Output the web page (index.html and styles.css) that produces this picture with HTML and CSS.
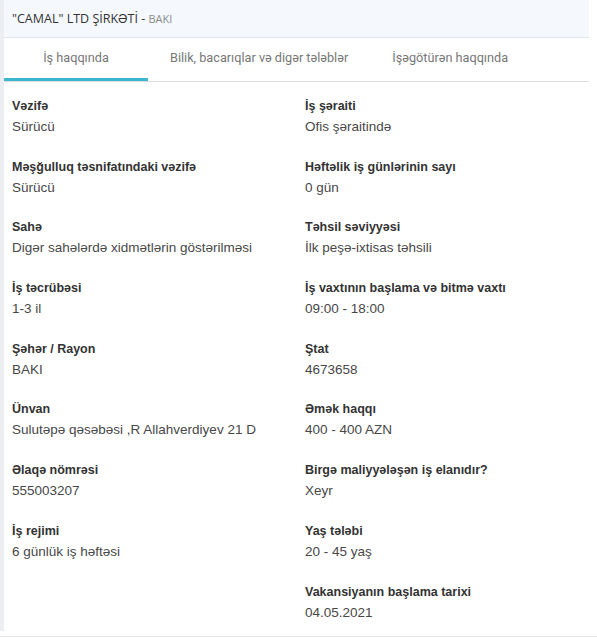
FILE: index.html
```html
<!DOCTYPE html>
<html lang="az">
<head>
    <meta charset="UTF-8">
    <meta name="viewport" content="width=device-width, initial-scale=1.0">
    <title>Vakansiya</title>
    <link rel="stylesheet" href="styles.css">
</head>
<body>
    <div class="vacancy">
        <div class="vacancy-head">
            "CAMAL" LTD ŞİRKƏTİ - <span class="city">BAKI</span>
        </div>
        <ul class="tabs">
            <li class="tab active">İş haqqında</li>
            <li class="tab">Bilik, bacarıqlar və digər tələblər</li>
            <li class="tab">İşəgötürən haqqında</li>
        </ul>
        <div class="details">
            <div class="item"><div class="label">Vəzifə</div><div class="value">Sürücü</div></div>
            <div class="item"><div class="label">İş şəraiti</div><div class="value">Ofis şəraitində</div></div>
            <div class="item"><div class="label">Məşğulluq təsnifatındaki vəzifə</div><div class="value">Sürücü</div></div>
            <div class="item"><div class="label">Həftəlik iş günlərinin sayı</div><div class="value">0 gün</div></div>
            <div class="item"><div class="label">Sahə</div><div class="value">Digər sahələrdə xidmətlərin göstərilməsi</div></div>
            <div class="item"><div class="label">Təhsil səviyyəsi</div><div class="value">İlk peşə-ixtisas təhsili</div></div>
            <div class="item"><div class="label">İş təcrübəsi</div><div class="value">1-3 il</div></div>
            <div class="item"><div class="label">İş vaxtının başlama və bitmə vaxtı</div><div class="value">09:00 - 18:00</div></div>
            <div class="item"><div class="label">Şəhər / Rayon</div><div class="value">BAKI</div></div>
            <div class="item"><div class="label">Ştat</div><div class="value">4673658</div></div>
            <div class="item"><div class="label">Ünvan</div><div class="value">Sulutəpə qəsəbəsi ,R Allahverdiyev 21 D</div></div>
            <div class="item"><div class="label">Əmək haqqı</div><div class="value">400 - 400 AZN</div></div>
            <div class="item"><div class="label">Əlaqə nömrəsi</div><div class="value">555003207</div></div>
            <div class="item"><div class="label">Birgə maliyyələşən iş elanıdır?</div><div class="value">Xeyr</div></div>
            <div class="item"><div class="label">İş rejimi</div><div class="value">6 günlük iş həftəsi</div></div>
            <div class="item"><div class="label">Yaş tələbi</div><div class="value">20 - 45 yaş</div></div>
            <div class="item"></div>
            <div class="item"><div class="label">Vakansiyanın başlama tarixi</div><div class="value">04.05.2021</div></div>
        </div>
    </div>
    <div class="page-line"></div>
</body>
</html>
```

FILE: styles.css
```css
/* General styles */
body {
    margin: 0;
    padding: 0;
    background-color: #fff;
    font-family: "Liberation Sans", Arial, sans-serif;
    color: #333;
}

.vacancy {
    width: 585px;
    border-left: 4px solid #eceef1;
    padding-bottom: 8px;
}

/* Header */
.vacancy-head {
    height: 37px;
    line-height: 37px;
    padding-left: 8px;
    background-color: #f5f9fd;
    border-bottom: 1px solid #e2e6ea;
    font-family: "Open Sans", sans-serif;
    font-size: 12.5px;
    color: #333;
}

.vacancy-head .city {
    font-size: 11px;
    color: #8a8a8a;
}

/* Tabs */
.tabs {
    list-style: none;
    margin: 0;
    padding: 0;
    display: flex;
    height: 43px;
    border-bottom: 1px solid #dcdcdc;
}

.tab {
    padding: 0 22px;
    line-height: 40px;
    font-family: Roboto, sans-serif;
    font-size: 12.7px;
    color: #777;
    border-bottom: 3px solid transparent;
}

.tab.active {
    min-width: 100px;
    text-align: center;
    border-bottom-color: #3cb6cf;
}

/* Details grid */
.details {
    display: grid;
    grid-template-columns: 293px 1fr;
    padding: 14px 8px 0;
    row-gap: 19.7px;
}

.label {
    font-size: 12.5px;
    font-weight: bold;
    line-height: 20px;
    color: #333;
}

.value {
    font-size: 13.5px;
    line-height: 21px;
    color: #484848;
}

.page-line {
    height: 2px;
    margin-top: 5px;
    background-color: #e8e8e8;
}
```
